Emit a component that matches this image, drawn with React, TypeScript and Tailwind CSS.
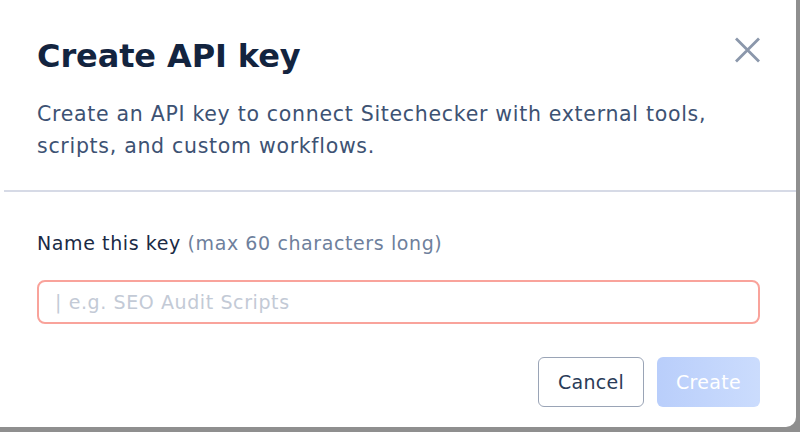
import React from "react";

export default function App() {
  return (
    <div className="w-[800px] h-[432px] bg-[#8f8f8f] overflow-hidden" style={{ fontFamily: '"DejaVu Sans", "Noto Sans", sans-serif' }}>
      <div className="w-[796px] h-[427px] bg-white rounded-br-[10px] flex flex-col">
        <div className="relative px-[37px] pt-[36px]">
          <h1 className="text-[32px] leading-[40px] font-bold text-[#13243f] tracking-[-0.1px]">Create API key</h1>
          <p className="mt-[22px] text-[20.5px] leading-[32px] text-[#3d5273] tracking-[0.7px]">
            Create an API key to connect Sitechecker with external tools,
            <br />
            scripts, and custom workflows.
          </p>
          <button className="absolute right-[35px] top-[37px] w-[27px] h-[26px] flex items-center justify-center" aria-label="Close">
            <svg width="27" height="26" viewBox="0 0 27 26" fill="none">
              <path d="M2 1.5L25 24.5M25 1.5L2 24.5" stroke="#8b97ab" strokeWidth="2.8" />
            </svg>
          </button>
        </div>
        <div className="mt-[28px] ml-[4px] h-[2px] bg-[#d6dae6]" />
        <div className="px-[37px] pt-[39px]">
          <div className="text-[19px] leading-[24px] tracking-[0.6px]">
            <span className="text-[#1a2a45]">Name this key</span>{" "}
            <span className="text-[#6e7f9c]">(max 60 characters long)</span>
          </div>
          <div className="mt-[25px] h-[44px] w-[723px] rounded-[8px] border-2 border-[#f9a39b] flex items-center px-[16px]">
            <span className="text-[19px] text-[#c3cad6] tracking-[0.6px]">| e.g. SEO Audit Scripts</span>
          </div>
          <div className="mt-[33px] flex justify-end gap-[13px] w-[723px]">
            <button className="w-[106px] h-[50px] rounded-[6px] border border-[#9aa4b6] bg-white text-[19px] text-[#2a3b58] tracking-[0.3px]">Cancel</button>
            <button className="w-[103px] h-[50px] rounded-[6px] bg-gradient-to-r from-[#b9cefb] to-[#cbdcfd] text-[19px] text-white tracking-[0.3px]">Create</button>
          </div>
        </div>
      </div>
    </div>
  );
}
